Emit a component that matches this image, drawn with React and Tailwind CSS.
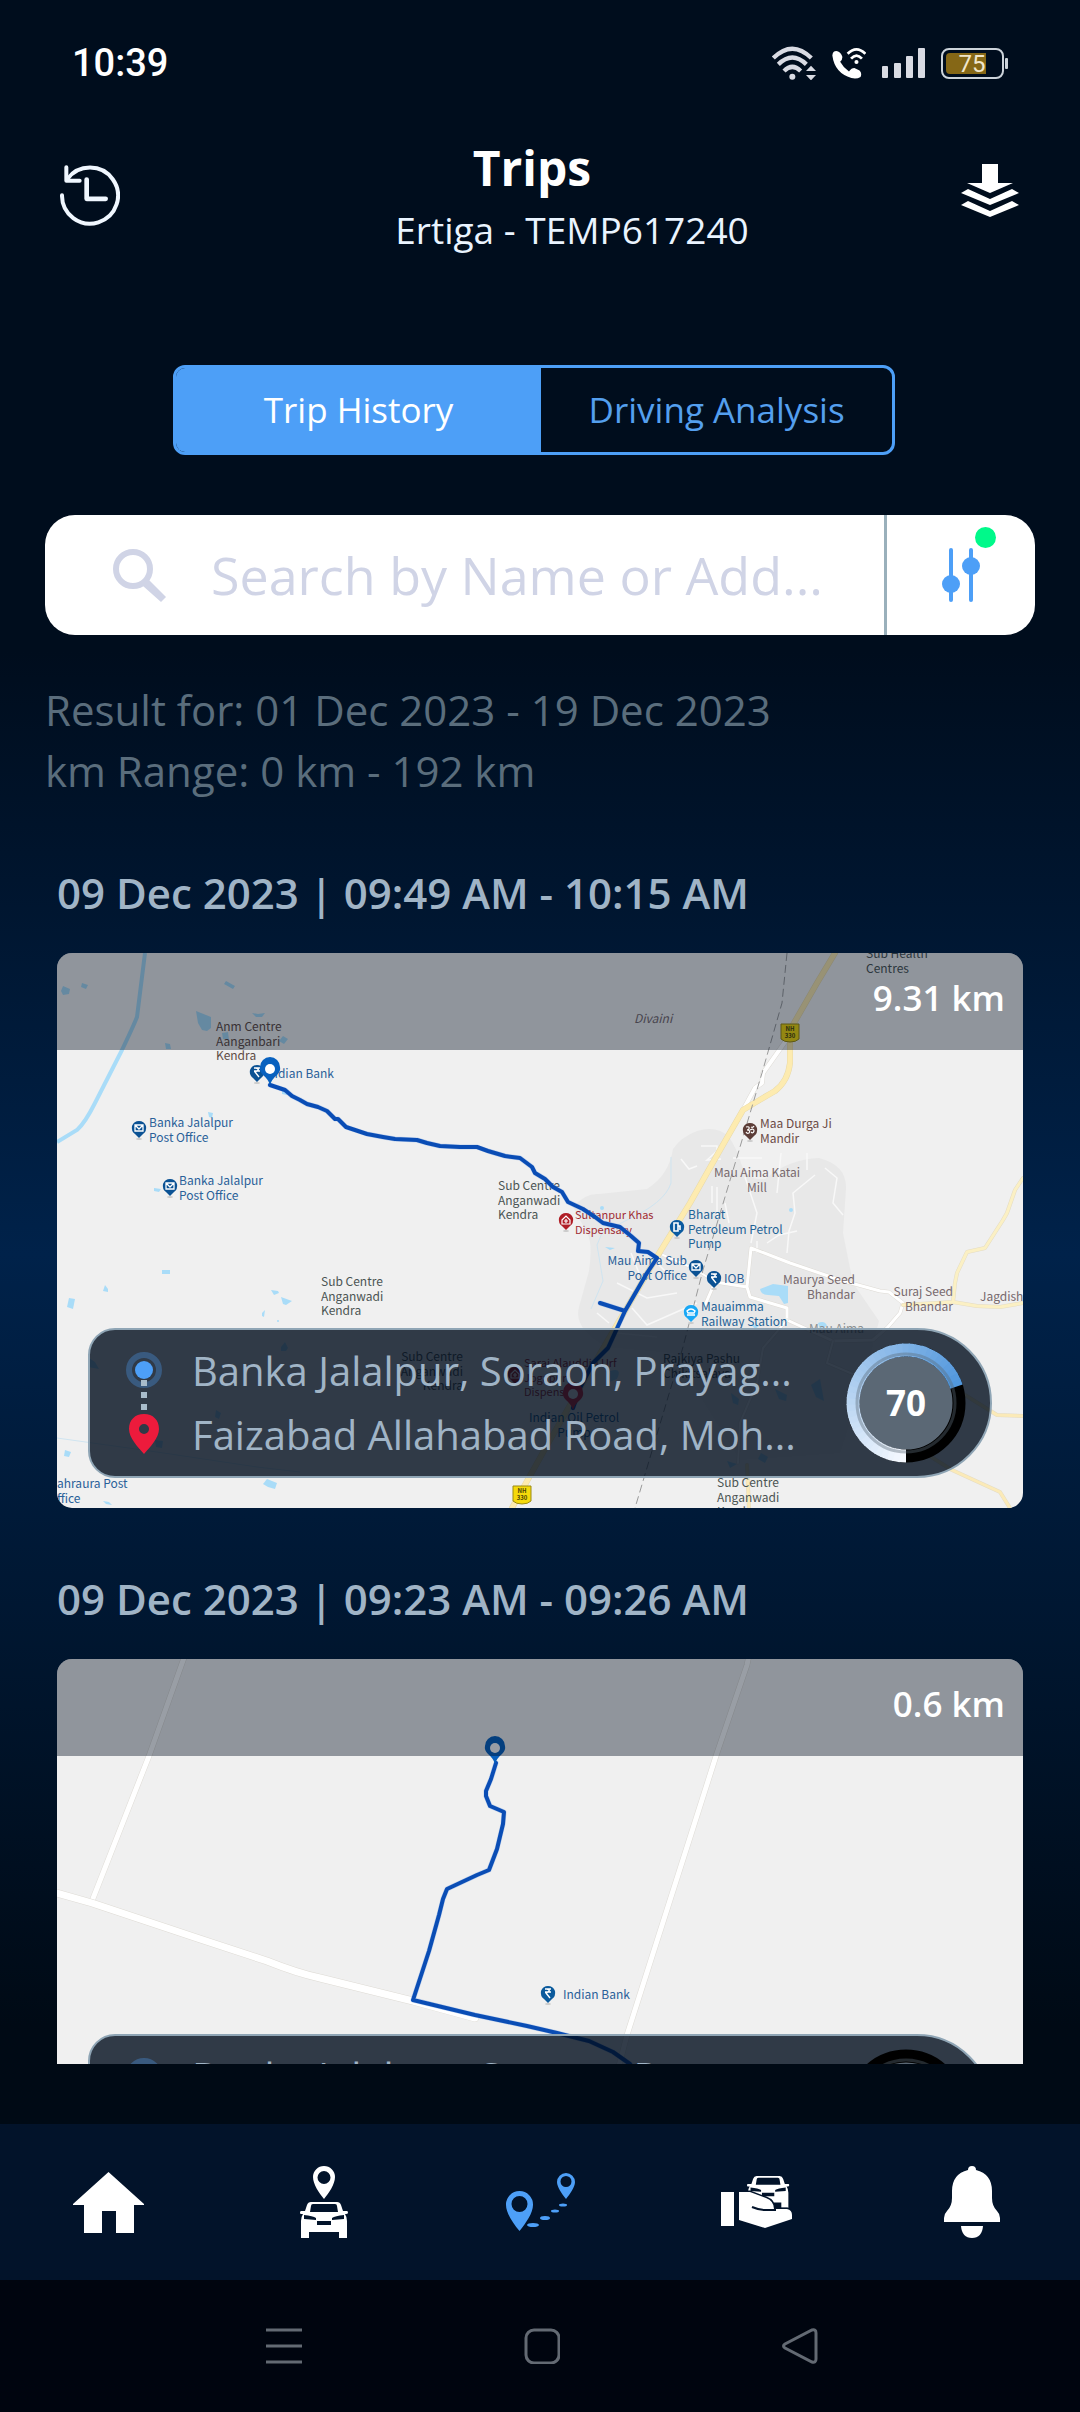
const MAP_FONT = '"Noto Sans CJK SC", "Noto Sans", sans-serif';

const labelColors = {
  grey: '#4b5453',
  brown: '#5f4b45',
  temple: '#6b4a45',
  shop: '#77696d',
  blue: '#2a6099',
  fuel: '#1f6397',
  red: '#a02c34',
  town: '#8d9192',
};

function WifiIcon() {
  return (
    <svg className="h-[34px] w-11" viewBox="69 42 132 102" aria-hidden="true">
      <g fill="none" stroke="#d9dbe3" strokeWidth="13">
        <path d="M73 78Q130 22 187 78" />
        <path d="M88 97Q130 56 172 97" />
        <path d="M105 117Q130 92 155 117" />
      </g>
      <circle cx="130" cy="134" r="9" fill="#d9dbe3" />
      <path d="M186 101L201 117H171ZM186 145L171 129H201Z" fill="#d9dbe3" />
    </svg>
  );
}

function WifiCallIcon() {
  return (
    <svg className="h-8 w-[34px]" viewBox="248 45 100 94" aria-hidden="true">
      <path
        d="M249 70Q250 57 261 57Q272 58 278 72Q280 82 272 88Q282 106 298 117Q305 107 314 107L329 114Q337 122 332 133Q320 140 305 136Q256 122 249 70Z"
        fill="#fff"
      />
      <g fill="none" stroke="#fff" strokeWidth="8">
        <path d="M294 65Q320 39 346 65" />
        <path d="M304 79Q320 61 336 79" />
      </g>
      <circle cx="320" cy="89" r="6" fill="#fff" />
    </svg>
  );
}

function SignalIcon() {
  return (
    <svg className="h-[30px] w-[43px]" viewBox="0 0 43 30" fill="#d9dbe3" aria-hidden="true">
      <rect x="0" y="18" width="6" height="12" rx="1" />
      <rect x="12" y="15" width="7" height="15" rx="1" />
      <rect x="24" y="8" width="7" height="22" rx="1" />
      <rect x="36" y="0" width="7" height="30" rx="1" />
    </svg>
  );
}

function BatteryIcon() {
  return (
    <svg className="h-[31px] w-[67px]" viewBox="0 0 67 31" aria-label="Battery 75 percent">
      <rect x="1" y="1" width="61" height="29" rx="7" fill="none" stroke="#ccd3da" strokeWidth="2" />
      <rect x="64" y="10" width="3" height="11" rx="1" fill="#ccd3da" />
      <path d="M9 5H45V26H9Q5 26 5 22V9Q5 5 9 5Z" fill="#856716" />
      <text x="31" y="24" textAnchor="middle" fontSize="24" fill="#f0e6cc" fontFamily="Roboto, sans-serif">75</text>
    </svg>
  );
}

function HistoryIcon() {
  return (
    <svg
      className="h-[61px] w-[60px]"
      viewBox="60 104 180 182"
      fill="none"
      stroke="#f0f7ff"
      strokeWidth="12"
      strokeLinecap="round"
      strokeLinejoin="round"
      aria-hidden="true"
    >
      <path d="M66 194A84 84 0 1 0 82 146" />
      <path d="M79 110V151H119" />
      <path d="M140 147V205H197" strokeWidth="14" />
    </svg>
  );
}

function DownloadIcon() {
  return (
    <svg className="h-[54px] w-[60px]" viewBox="0 0 60 54" fill="#fff" aria-hidden="true">
      <path d="M22 0H38V19H53L30 29L7 19H22Z" />
      <path d="M8 25L30 35L52 25L59 29L30 41L1 29Z" />
      <path d="M8 37L30 47L52 37L59 41L30 53L1 41Z" />
    </svg>
  );
}

function SearchIcon() {
  return (
    <svg className="h-[53px] w-[53px] shrink-0" viewBox="0 0 53 53" aria-hidden="true">
      <circle cx="20" cy="20" r="17" fill="none" stroke="#d0d4e6" strokeWidth="6" />
      <path d="M30 35L35 30L53 48L48 53L30 37Z" fill="#d0d4e6" />
    </svg>
  );
}

function FilterIcon() {
  return (
    <svg className="h-[54px] w-[38px]" viewBox="0 0 38 54" aria-hidden="true">
      <path d="M9 2V52M29 2V52" stroke="#4d9ff7" strokeWidth="4" strokeLinecap="round" />
      <circle cx="9" cy="36" r="9" fill="#4d9ff7" />
      <circle cx="29" cy="18" r="9" fill="#4d9ff7" />
    </svg>
  );
}

function StatusBar() {
  return (
    <div className="flex items-center justify-between pt-[42px] pr-[72px] pl-[72px]">
      <span className="text-[38px]/[42px] font-medium font-[Roboto,sans-serif]">10:39</span>
      <div className="flex items-center gap-4">
        <WifiIcon />
        <WifiCallIcon />
        <SignalIcon />
        <BatteryIcon />
      </div>
    </div>
  );
}

function Header() {
  return (
    <header className="mt-[50px] flex items-start justify-between px-[60px]">
      <button type="button" aria-label="History" className="mt-[31px]">
        <HistoryIcon />
      </button>
      <div className="flex flex-col items-center">
        <h1 className="pr-4 text-[48px]/[68px] font-bold">Trips</h1>
        <p className="pl-16 text-[37px]/[56px] text-[#eaf4ff]">Ertiga - TEMP617240</p>
      </div>
      <button type="button" aria-label="Download" className="mt-[30px]">
        <DownloadIcon />
      </button>
    </header>
  );
}

function ViewTabs() {
  return (
    <div
      role="tablist"
      className="mt-[107px] mr-[185px] ml-[173px] flex h-[90px] overflow-hidden rounded-xl border-[3px] border-[#4d9ff7] text-[35px]"
    >
      <button type="button" role="tab" aria-selected="true" className="w-[51%] bg-[#4d9ff7] text-white">
        Trip History
      </button>
      <button type="button" role="tab" aria-selected="false" className="flex-1 text-[#549fee]">
        Driving Analysis
      </button>
    </div>
  );
}

function SearchBar() {
  return (
    <div className="mx-[45px] mt-[60px] flex h-[120px] rounded-[30px] bg-white">
      <label className="flex min-w-0 flex-1 items-center gap-[45px] pl-[68px]">
        <SearchIcon />
        <input
          type="text"
          aria-label="Search trips"
          placeholder="Search by Name or Add..."
          className="min-w-0 flex-1 bg-transparent text-[52px] text-slate-700 outline-none placeholder:text-[#d0d4e6]"
        />
      </label>
      <button
        type="button"
        aria-label="Filter"
        className="relative flex w-[151px] items-center justify-center border-l-[3px] border-[#9ab0bb]"
      >
        <FilterIcon />
        <span className="absolute top-3 right-[39px] size-[21px] rounded-full bg-[#00f98a]" />
      </button>
    </div>
  );
}

function Label({ x, y, lines, color = 'grey', anchor = 'start', size = 12, italic = false }) {
  return (
    <text
      fill={labelColors[color]}
      fontSize={size}
      textAnchor={anchor}
      fontStyle={italic ? 'italic' : 'normal'}
      fontFamily={MAP_FONT}
    >
      {lines.map((line, i) => (
        <tspan key={line} x={x} y={y + Math.round(i * 14.5)}>
          {line}
        </tspan>
      ))}
    </text>
  );
}

const poiGlyphs = {
  mail: <path d="M-4 -3H4V3H-4ZM-4 -3L0 1L4 -3" fill="none" stroke="#fff" strokeWidth="1.3" />,
  rupee: <path d="M-3 -4H3M-3 -1H3M-1 -4Q3 -3 0 -1L-2 0L2 5" fill="none" stroke="#fff" strokeWidth="1.4" />,
  fuel: <path d="M-3 -4H1V4H-3ZM1 -1H3V3" fill="none" stroke="#fff" strokeWidth="1.6" />,
  cross: (
    <path d="M-4 0L0 -4L4 0V4H-4ZM0 -1V3M-2 1H2" fill="none" stroke="#fff" strokeWidth="1.2" />
  ),
  om: (
    <path
      d="M-4 -3Q0 -4 -1 -1Q-2 0 -3 0Q1 0 -1 3Q-3 4 -4 2M0 0Q4 -2 4 1Q3 4 1 2M1 -3Q3 -2 4 -4"
      fill="none"
      stroke="#fff"
      strokeWidth="1.2"
    />
  ),
  train: <path d="M-4 -1Q0 -5 4 -1L3 1H-3ZM-4 3H4" fill="none" stroke="#fff" strokeWidth="1.4" />,
};

function Poi({ x, y, color, glyph }) {
  return (
    <g transform={`translate(${x} ${y})`}>
      <ellipse cx="0" cy="11" rx="3" ry="1" fill="#c9c9c9" />
      <path d="M0 10L-4 6Q-8 3 -7 -2Q-5 -7 0 -7Q5 -7 7 -2Q8 3 4 6Z" fill={color} />
      {poiGlyphs[glyph]}
    </g>
  );
}

function RoutePin({ x, y, color }) {
  return (
    <g transform={`translate(${x} ${y})`}>
      <path
        d="M0 0Q-2 -6 -7 -10Q-11 -14 -10 -18A10 10 0 0 1 10 -18Q11 -14 7 -10Q2 -6 0 0Z"
        fill={color}
      />
      <circle cx="0" cy="-16" r="5" fill="#fff" />
    </g>
  );
}

function HighwayBadge({ x, y }) {
  return (
    <g transform={`translate(${x} ${y})`}>
      <path d="M-9 -9H9V6Q6 9 0 9Q-6 9 -9 6Z" fill="#f5d90a" stroke="#9b8b14" />
      <text textAnchor="middle" fontSize="6" fontWeight="700" fill="#4a4208" fontFamily={MAP_FONT}>
        <tspan x="0" y="-2">NH</tspan>
        <tspan x="0" y="5">330</tspan>
      </text>
    </g>
  );
}

function Road({ d, width = 3, color = '#ffffff', casing = '#dedbd5' }) {
  return (
    <g fill="none" strokeLinecap="round" strokeLinejoin="round">
      <path d={d} stroke={casing} strokeWidth={width + 1} />
      <path d={d} stroke={color} strokeWidth={width} />
    </g>
  );
}

function Route({ d }) {
  return (
    <g fill="none" strokeLinejoin="round" strokeLinecap="round">
      <path d={d} stroke="#8fb4ea" strokeWidth="5" strokeOpacity="0.5" />
      <path d={d} stroke="#0a4db5" strokeWidth="4" />
    </g>
  );
}

function TownMap() {
  return (
    <svg className="block h-[555px] w-full bg-[#f0f0f0]" viewBox="0 0 966 555" preserveAspectRatio="xMidYMid slice" aria-label="Trip route map">
      <path
        d="M516 254Q528 240 542 241L590 236Q612 222 616 196Q624 184 640 178Q660 172 672 184Q680 196 684 210Q690 228 708 226Q732 206 762 205Q790 212 789 236L786 280L796 330L822 368L806 430L783 500L683 507L616 400L550 394Q516 376 522 354L532 318Q536 290 530 280Z"
        fill="#e8e8e8"
      />
      <g fill="#a9dcf8">
        <path d="M6 33L13 36L12 41L6 42L4 38Z" />
        <path d="M25 30L31 32L29 36L24 34Z" />
        <path d="M169 28L178 33L176 36L167 31Z" />
        <path d="M139 58L154 64L154 75L150 78L145 77L141 70Z" />
        <path d="M195 60L201 61L208 60L205 64L199 64Z" />
        <path d="M108 90L113 91L114 96L109 96Z" />
        <path d="M165 80L171 79L172 87L166 86Z" />
        <path d="M226 83L231 86L227 91L222 88Z" />
        <path d="M225 136L231 137L230 142L225 141Z" />
        <path d="M151 159L156 160L155 165L152 164Z" />
        <path d="M97 235L104 236L102 239L97 238Z" />
        <path d="M105 317H113V321H105Z" />
        <path d="M46 338L48 332L51 336L51 339Z" />
        <path d="M12 345L18 346L16 356L10 354Z" />
        <path d="M214 337L221 338L222 340L217 342Z" />
        <path d="M224 344L235 348L229 352L226 351Z" />
        <path d="M205 360L208 357L207 364L205 363Z" />
        <circle cx="221" cy="368" r="1" />
        <path d="M32 405L38 409L42 416L31 414Z" />
        <path d="M224 394L228 389L231 395L229 398L224 398Z" />
        <path d="M8 497L14 499L12 504L7 503Z" />
        <path d="M206 531L210 526L220 530L218 536L211 534Z" />
        <path d="M46 548L52 549L55 552L49 551Z" />
        <path d="M98 487L106 488L105 495L99 494Z" />
        <path d="M159 457L164 460L162 466L158 464Z" />
        <path d="M703 336L716 331L731 333V350L727 351L722 343L711 342Q704 342 703 336Z" />
        <path d="M761 370Q768 367 770 373L763 376Z" />
        <path d="M553 418Q566 414 560 426L550 430Z" />
        <path d="M754 432L763 426L767 448L759 444Z" />
        <path d="M674 440L682 446L681 452L676 450Z" />
        <path d="M718 436L730 442L729 448L722 446Z" />
        <path d="M670 508L680 511L673 515Z" />
        <path d="M704 500L711 504L708 510L701 506Z" />
        <circle cx="545" cy="255" r="2" />
        <circle cx="734" cy="257" r="2" />
        <path d="M548 294L558 295L553 297Z" />
        <path d="M694 371L702 373L698 376Z" />
      </g>
      <path d="M88 0L80 64Q76 74 65 97L38 150Q28 170 20 177L0 189" fill="none" stroke="#a9dcf8" strokeWidth="4" />
      <path
        d="M0 485L100 499L200 514L243 519M614 204V230Q608 250 568 268L545 280L540 292L546 328L534 356"
        fill="none"
        stroke="#cfe4f0"
        strokeWidth="1"
      />
      <path
        d="M644 193H660V198L650 207L664 206M655 233V250M660 234V264M676 205H705M624 206L632 216L640 213M688 224L700 260L694 290M724 200L720 240M750 200V217M758 222L736 240L738 260L732 278L730 300M768 215L780 225L776 250L786 262M710 290L722 282L740 278M668 250L672 270M560 330L590 345L620 340M600 310L612 322M575 355L590 372L640 350M540 360L552 370M700 300V288M560 380L600 384M574 300L582 320"
        fill="none"
        stroke="#f8f8f8"
        strokeWidth="1.5"
      />
      <Road
        d="M648 352L658 329L690 334L694 295L733 310L783 327L823 338L832 339L846 350L843 360L830 375L816 387L776 388L730 367V355L693 344L690 334"
        width={3}
      />
      <Road d="M606 302L638 316L658 329" width={2} />
      <Road d="M730 367L706 395L700 430L683 470L681 510" width={2} />
      <Road d="M776 388L770 410L840 440L900 452" width={2} />
      <Road d="M728 89L706 120L705 130L698 135L686 157" width={4} />
      <Road
        d="M846 352L896 349L920 353L943 354L966 350M896 349L898 330L900 320L910 299L928 295L946 267L950 260L958 237L966 225"
        color="#fbf0c4"
        casing="#e4dcc4"
      />
      <Road d="M820 420L900 437L940 462L966 463M690 512L692 555M836 480L895 517L943 539L953 555" color="#fbeab8" casing="#e4dcc4" />
      <Road
        d="M778 0L760 30L733 77V110Q731 128 718 138Q704 146 686 157L663 197L633 250L601 302L568 358L520 440L493 487L455 555"
        width={5}
        color="#fdebb0"
        casing="#e8d9a8"
      />
      <path
        d="M730 0L725 50L705 120L683 194L656 284L646 317L626 394L578 555"
        fill="none"
        stroke="#9a9a9a"
        strokeWidth="1"
        strokeDasharray="8 4"
      />
      <Label x={159} y={78} lines={['Anm Centre', 'Aanganbari', 'Kendra']} color="brown" />
      <Label x={577} y={70} lines={['Divaini']} color="shop" italic />
      <Label x={809} y={5} lines={['Sub Health', 'Centres']} />
      <Label x={277} y={125} lines={['Indian Bank']} color="blue" anchor="end" />
      <Label x={92} y={174} lines={['Banka Jalalpur', 'Post Office']} color="blue" />
      <Label x={122} y={232} lines={['Banka Jalalpur', 'Post Office']} color="blue" />
      <Label x={441} y={237} lines={['Sub Centre', 'Anganwadi', 'Kendra']} />
      <Label x={703} y={175} lines={['Maa Durga Ji', 'Mandir']} color="temple" />
      <Label x={700} y={224} lines={['Mau Aima Katai', 'Mill']} color="shop" anchor="middle" />
      <Label x={518} y={266} lines={['Sultanpur Khas', 'Dispensary']} color="red" size={11} />
      <Label x={631} y={266} lines={['Bharat', 'Petroleum Petrol', 'Pump']} color="fuel" />
      <Label x={630} y={312} lines={['Mau Aima Sub', 'Post Office']} color="blue" anchor="end" />
      <Label x={667} y={330} lines={['IOB']} color="blue" />
      <Label x={644} y={358} lines={['Mauaimma', 'Railway Station']} color="fuel" />
      <Label x={798} y={331} lines={['Maurya Seed', 'Bhandar']} color="shop" anchor="end" />
      <Label x={896} y={343} lines={['Suraj Seed', 'Bhandar']} color="shop" anchor="end" />
      <Label x={923} y={348} lines={['Jagdish']} color="shop" />
      <Label x={752} y={380} lines={['Mau Aima']} color="town" />
      <Label x={264} y={333} lines={['Sub Centre', 'Anganwadi', 'Kendra']} />
      <Label x={406} y={408} lines={['Sub Centre', 'Anganwadi', 'Kendra']} anchor="end" />
      <Label x={467} y={414} lines={['Sarai Alauddin Urf', 'Jogapur', 'Dispensary']} color="red" size={11} />
      <Label x={606} y={410} lines={['Rajkiya Pashu', 'Chikitsalaya']} />
      <Label x={517} y={469} lines={['Indian Oil Petrol', 'Pump']} color="fuel" anchor="middle" />
      <Label x={0} y={535} lines={['ahraura Post', 'ffice']} color="blue" />
      <Label x={660} y={534} lines={['Sub Centre', 'Anganwadi', 'Kendra']} />
      <Poi x={200} y={119} color="#0b5294" glyph="rupee" />
      <Poi x={82} y={175} color="#0b5294" glyph="mail" />
      <Poi x={113} y={233} color="#0b5294" glyph="mail" />
      <Poi x={693} y={177} color="#5c3d38" glyph="om" />
      <Poi x={509} y={267} color="#b01e26" glyph="cross" />
      <Poi x={620} y={274} color="#0b5ba0" glyph="fuel" />
      <Poi x={639} y={314} color="#0b5294" glyph="mail" />
      <Poi x={657} y={325} color="#0b5294" glyph="rupee" />
      <Poi x={634} y={359} color="#1aa8f5" glyph="train" />
      <Poi x={458} y={421} color="#b01e26" glyph="cross" />
      <HighwayBadge x={733} y={80} />
      <HighwayBadge x={465} y={542} />
      <Route d="M213 132L228 137L235 143L243 147L250 151L261 154L270 158L278 166H281L289 174L298 177L310 181L326 184L338 186L360 187L370 190L383 193L403 194L420 194L431 198L448 203L463 205L475 214L478 220L488 226L496 234L505 239L511 249L526 256L538 264L546 270L563 274L574 283L582 290L581 298L591 299L600 305L590 320L568 358L543 350M568 358L551 395L536 410L523 435L516 455" />
      <RoutePin x={213} y={132} color="#0861bf" />
      <RoutePin x={516} y={457} color="#e02a3c" />
    </svg>
  );
}

function VillageMap() {
  return (
    <svg className="block h-[555px] w-full bg-[#f0f0f0]" viewBox="0 0 966 555" preserveAspectRatio="xMidYMid slice" aria-label="Trip route map">
      <Road d="M128 -4L92 97L35 242" width={5} />
      <Road d="M692 -4L690 6L659 97L570 376L556 430" width={5} />
      <Road d="M-4 233L35 244L143 280L210 302Q240 314 263 319L356 342L418 359" width={7} />
      <Label x={506} y={340} lines={['Indian Bank']} color="blue" />
      <Poi x={491} y={334} color="#0b5a9c" glyph="rupee" />
      <Route d="M439 104L434 120L429 132V137L433 147L447 153L446 165L440 190L432 211L420 216L405 223L390 230L386 240L382 256L372 292L356 341L418 356L470 367L500 374L532 382L556 393L573 405L590 430" />
      <RoutePin x={438} y={105} color="#0861bf" />
    </svg>
  );
}

function gaugePoint(fraction, radius) {
  const angle = Math.PI / 2 + fraction * 2 * Math.PI;
  return `${60 + radius * Math.cos(angle)} ${60 + radius * Math.sin(angle)}`;
}

function gaugeColor(t) {
  const from = [245, 249, 255];
  const to = [77, 148, 219];
  return `rgb(${from.map((c, i) => Math.round(c + (to[i] - c) * t)).join(' ')})`;
}

function ScoreGauge({ score }) {
  const steps = 40;
  const total = score / 100;
  return (
    <div className="relative size-[120px] shrink-0">
      <svg className="size-full" viewBox="0 0 120 120" aria-hidden="true">
        <circle cx="60" cy="60" r="50" fill="#5b6875" />
        <circle cx="60" cy="60" r="53" fill="none" stroke="#000" strokeWidth="13" />
        {Array.from({ length: steps }, (_, i) => (
          <path
            key={i}
            d={`M${gaugePoint((i / steps) * total, 53)}A53 53 0 0 1 ${gaugePoint(Math.min((i + 1.15) / steps, 1) * total, 53)}`}
            fill="none"
            stroke={gaugeColor(i / steps)}
            strokeWidth="13"
          />
        ))}
        <circle cx="60" cy="60" r="49" fill="none" stroke="#5b6875" strokeOpacity="0.4" strokeWidth="3" />
      </svg>
      <span className="absolute inset-0 flex items-center justify-center text-[35px] font-bold text-white">{score}</span>
    </div>
  );
}

function EndpointMarks() {
  return (
    <svg className="h-[102px] w-9 shrink-0" viewBox="0 0 36 102" aria-hidden="true">
      <circle cx="18" cy="18" r="15" fill="none" stroke="#4d9ff7" strokeOpacity="0.32" strokeWidth="6" />
      <circle cx="18" cy="18" r="9" fill="#4d9ff7" />
      <path d="M15 28H21V34H15ZM15 40H21V46H15ZM15 52H21V58H15Z" fill="#a8bccb" />
      <path
        d="M18 62C9 62 3 68 3 77C3 86 12 95 18 102C24 95 33 86 33 77C33 68 27 62 18 62ZM18 72A5 5 0 1 1 18 82A5 5 0 1 1 18 72Z"
        fill="#ed1b3c"
      />
    </svg>
  );
}

function TripCard({ time, distance, from, to, score, map }) {
  return (
    <article className="pb-[57px]">
      <h2 className="text-[42px]/[68px] font-semibold text-[#a0b4c6]">{time}</h2>
      <div className="relative mt-[26px] overflow-hidden rounded-[15px]">
        {map}
        <div className="absolute inset-x-0 top-0 flex h-[97px] justify-end bg-[#000d1d]/40 pt-[18px] pr-[18px]">
          <span className="text-[35px]/[54px] font-semibold text-white">{distance}</span>
        </div>
        <div className="absolute inset-x-[31px] bottom-[30px] flex h-[150px] items-center rounded-l-[27px] rounded-r-[75px] border-2 border-[#8fa5b5] bg-[#000d1d]/80 pr-6 pl-9">
          <EndpointMarks />
          <div className="ml-[30px] min-w-0 flex-1 text-[40px]/[64px] whitespace-nowrap text-[#a0b4c6]">
            <p>{from}</p>
            <p>{to}</p>
          </div>
          <ScoreGauge score={score} />
        </div>
      </div>
    </article>
  );
}

function HomeIcon() {
  return (
    <svg className="h-[61px] w-[71px]" viewBox="0 0 71 61" fill="currentColor" aria-hidden="true">
      <path d="M35.5 0L71 32V33H61V61H43V39H29V61H11V33H0V32Z" />
    </svg>
  );
}

const carPath =
  'M11 0H37Q40 0 41 3L43 9H47Q48 9 48 10.500Q48 12 46 12H45Q47 15 47 19V36H39V30H9V36H1V19Q1 15 3 12H1Q0 12 0 10.500Q0 9 1 9H5L7 3Q8 0 11 0ZM13 2Q11 2 11 4L10 10H38L37 4Q37 2 35 2ZM4 13V17L16 18V16Q13 14 4 13ZM44 13Q35 14 32 16V18L44 17ZM17 19V23H31V19Z';

function CarPinIcon() {
  return (
    <svg className="h-[72px] w-12" viewBox="0 0 48 72" fill="currentColor" fillRule="evenodd" aria-hidden="true">
      <path d="M24 0A11 11 0 0 1 35 11C35 18 29 27 24 33C19 27 13 18 13 11A11 11 0 0 1 24 0ZM24 5A6.500 6.500 0 1 0 24 18A6.500 6.500 0 1 0 24 5Z" />
      <path d={carPath} transform="translate(0 36)" />
    </svg>
  );
}

function TripsIcon() {
  return (
    <svg className="h-[60px] w-[69px]" viewBox="0 0 69 60" fill="currentColor" fillRule="evenodd" aria-hidden="true">
      <path d="M13.500 19A13.500 13.500 0 0 1 27 33C27 41 20 51 13.500 59C7 51 0 41 0 33A13.500 13.500 0 0 1 13.500 19ZM13.500 24A8 8 0 1 0 13.500 40A8 8 0 1 0 13.500 24Z" />
      <path d="M60 1A9 9 0 0 1 69 10C69 15 64 22 60 27C56 22 51 15 51 10A9 9 0 0 1 60 1ZM60 4A5.500 5.500 0 1 0 60 15A5.500 5.500 0 1 0 60 4Z" />
      <ellipse cx="27" cy="53" rx="6" ry="2" />
      <ellipse cx="39" cy="46" rx="5" ry="2" />
      <ellipse cx="49" cy="39" rx="4" ry="1.500" />
      <ellipse cx="57" cy="33" rx="4" ry="1.500" />
    </svg>
  );
}

function HandCarIcon() {
  return (
    <svg className="h-[52px] w-[71px]" viewBox="0 0 71 52" fill="currentColor" aria-hidden="true">
      <g fillRule="evenodd">
        <path d={carPath} transform="translate(26 0) scale(0.88)" />
      </g>
      <path
        d="M18 16H29L45 22Q53 25 53 33H66Q71 34 71 39V43L44 52L18 44Z"
        stroke="#02132a"
        strokeWidth="3"
        paintOrder="stroke"
      />
      <path d="M31 31Q38 34 44 34H55" fill="none" stroke="#02132a" strokeWidth="2" />
      <path d="M0 16H13V50H0Z" />
    </svg>
  );
}

function BellIcon() {
  return (
    <svg className="h-[72px] w-14" viewBox="0 0 56 72" fill="currentColor" aria-hidden="true">
      <path d="M24 4Q24 0 28 0Q32 0 32 4Q48 8 48 25V32Q48 40 53 45Q56 48 56 52V56H0V52Q0 48 3 45Q8 40 8 32V25Q8 8 24 4Z" />
      <path d="M17 60H39Q38 72 28 72Q18 72 17 60Z" />
    </svg>
  );
}

const navItems = [
  { label: 'Home', icon: <HomeIcon /> },
  { label: 'Locate', icon: <CarPinIcon /> },
  { label: 'Trips', icon: <TripsIcon />, active: true },
  { label: 'Car care', icon: <HandCarIcon /> },
  { label: 'Alerts', icon: <BellIcon /> },
];

function BottomNav() {
  return (
    <nav className="grid h-[156px] shrink-0 grid-cols-5 bg-[#02132a]">
      {navItems.map((item) => (
        <a
          key={item.label}
          href={`#${item.label.toLowerCase().replace(' ', '-')}`}
          aria-label={item.label}
          aria-current={item.active ? 'page' : undefined}
          className={`flex items-center justify-center ${item.active ? 'text-[#4d9ff7]' : 'text-white'}`}
        >
          {item.icon}
        </a>
      ))}
    </nav>
  );
}

function SystemNav() {
  return (
    <div className="flex h-[132px] shrink-0 items-center justify-center gap-[222px] bg-[#00050f] pl-1">
      <button type="button" aria-label="Recent apps">
        <svg className="size-9" viewBox="0 0 36 36" stroke="#636a73" strokeWidth="3" aria-hidden="true">
          <path d="M0 2H36M0 18H36M0 34H36" />
        </svg>
      </button>
      <button type="button" aria-label="Home screen">
        <svg className="size-9" viewBox="0 0 36 36" fill="none" stroke="#636a73" strokeWidth="3" aria-hidden="true">
          <rect x="2" y="2" width="33" height="33" rx="8" />
        </svg>
      </button>
      <button type="button" aria-label="Back">
        <svg className="size-9" viewBox="0 0 36 36" fill="none" stroke="#636a73" strokeWidth="3" aria-hidden="true">
          <path d="M30 2Q34 1 34 5V31Q34 35 30 34L3 20Q0 18 3 16Z" />
        </svg>
      </button>
    </div>
  );
}

export default function App() {
  return (
    <div className="flex h-screen flex-col bg-[#000d1d] bg-[linear-gradient(to_bottom,#000d1d_0%,#000d1d_27%,#00224a_52%,#000a15_84%)] font-['Open_Sans',sans-serif] text-white">
      <StatusBar />
      <Header />
      <ViewTabs />
      <SearchBar />
      <section className="mx-[45px] mt-11 text-[42px]/[61px] text-[#5a6d7c]">
        <p>Result for: 01 Dec 2023 - 19 Dec 2023</p>
        <p>km Range: 0 km - 192 km</p>
      </section>
      <main className="mx-[57px] mt-[58px] mb-[60px] min-h-0 flex-1 overflow-hidden">
        <TripCard
          time="09 Dec 2023 | 09:49 AM - 10:15 AM"
          distance="9.31 km"
          from="Banka Jalalpur, Soraon, Prayag..."
          to="Faizabad Allahabad Road, Moh..."
          score={70}
          map={<TownMap />}
        />
        <TripCard
          time="09 Dec 2023 | 09:23 AM - 09:26 AM"
          distance="0.6 km"
          from="Banka Jalalpur, Soraon, Prayag..."
          to="Faizabad Allahabad Road, Moh..."
          score={30}
          map={<VillageMap />}
        />
      </main>
      <BottomNav />
      <SystemNav />
    </div>
  );
}
